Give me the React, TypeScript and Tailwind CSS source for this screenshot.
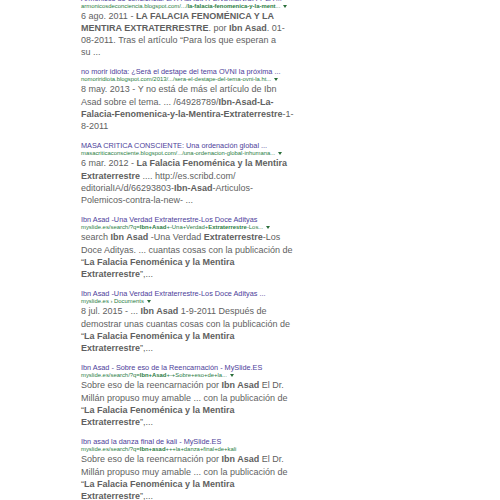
import React from "react";

type Seg = string | { b: string };
type R = { title: string; url: Seg[]; caret?: boolean; lines: Seg[][] };

const render = (segs: Seg[]) =>
  segs.map((s, i) =>
    typeof s === "string" ? (
      <span key={i}>{s}</span>
    ) : (
      <span key={i} className="font-bold">
        {s.b}
      </span>
    )
  );

const falacia: Seg[][] = [
  ["“", { b: "La Falacia Fenoménica y la Mentira" }],
  [{ b: "Extraterrestre" }, "”,..."],
];

const results: R[] = [
  {
    title: "Armónicos de conciencia: LA FALACIA FENOMÉNICA Y LA ...",
    url: [
      "armonicosdeconciencia.blogspot.com/.../",
      { b: "la-falacia-fenomenica-y-la-ment" },
      "...",
    ],
    caret: true,
    lines: [
      ["6 ago. 2011 - ", { b: "LA FALACIA FENOMÉNICA Y LA" }],
      [{ b: "MENTIRA EXTRATERRESTRE" }, ". por ", { b: "Ibn Asad" }, ". 01-"],
      ["08-2011. Tras el artículo “Para los que esperan a"],
      ["su ..."],
    ],
  },
  {
    title: "no morir idiota: ¿Será el destape del tema OVNI la próxima ...",
    url: ["nomoriridiota.blogspot.com/2013/.../sera-el-destape-del-tema-ovni-la.ht..."],
    caret: true,
    lines: [
      ["8 may. 2013 - Y no está de más el artículo de Ibn"],
      ["Asad sobre el tema. ... /64928789/", { b: "Ibn-Asad-La-" }],
      [{ b: "Falacia-Fenomenica-y-la-Mentira-Extraterrestre" }, "-1-"],
      ["8-2011"],
    ],
  },
  {
    title: "MASA CRITICA CONSCIENTE: Una ordenación global ...",
    url: ["masacriticaconsciente.blogspot.com/.../una-ordenacion-global-inhumana..."],
    caret: true,
    lines: [
      ["6 mar. 2012 - ", { b: "La Falacia Fenoménica y la Mentira" }],
      [{ b: "Extraterrestre" }, " .... http://es.scribd.com/"],
      ["editorialIA/d/66293803-", { b: "Ibn-Asad" }, "-Articulos-"],
      ["Polemicos-contra-la-new- ..."],
    ],
  },
  {
    title: "Ibn Asad -Una Verdad Extraterrestre-Los Doce Adityas",
    url: [
      "myslide.es/search/?q=",
      { b: "Ibn+Asad" },
      "+-Una+Verdad+",
      { b: "Extraterrestre" },
      "-Los...",
    ],
    caret: true,
    lines: [
      ["search ", { b: "Ibn Asad" }, " -Una Verdad ", { b: "Extraterrestre" }, "-Los"],
      ["Doce Adityas. ... cuantas cosas con la publicación de"],
      ...falacia,
    ],
  },
  {
    title: "Ibn Asad -Una Verdad Extraterrestre-Los Doce Adityas ...",
    url: ["myslide.es › Documents"],
    caret: true,
    lines: [
      ["8 jul. 2015 - ... ", { b: "Ibn Asad" }, " 1-9-2011 Después de"],
      ["demostrar unas cuantas cosas con la publicación de"],
      ...falacia,
    ],
  },
  {
    title: "Ibn Asad - Sobre eso de la Reencarnación - MySlide.ES",
    url: ["myslide.es/search/?q=", { b: "Ibn+Asad" }, "+-+Sobre+eso+de+la..."],
    caret: true,
    lines: [
      ["Sobre eso de la reencarnación por ", { b: "Ibn Asad" }, " El Dr."],
      ["Millán propuso muy amable ... con la publicación de"],
      ...falacia,
    ],
  },
  {
    title: "Ibn asad la danza final de kali - MySlide.ES",
    url: ["myslide.es/search/?q=", { b: "Ibn+asad" }, "+++la+danza+final+de+kali"],
    caret: false,
    lines: [
      ["Sobre eso de la reencarnación por ", { b: "Ibn Asad" }, " El Dr."],
      ["Millán propuso muy amable ... con la publicación de"],
      ...falacia,
    ],
  },
];

function Result({ r, first }: { r: R; first: boolean }) {
  return (
    <div className={first ? "mt-[-5.5px] mb-[9.8px]" : "mb-[9.8px]"}>
      <div className="whitespace-nowrap text-[7.3px] leading-[8px] text-[#4d3e9a]">{r.title}</div>
      <div className="flex items-center whitespace-nowrap text-[5.9px] leading-[7px] text-[#2a7d3f]">
        <span>{render(r.url)}</span>
        {r.caret && (
          <span className="ml-[3px] inline-block h-0 w-0 border-x-[2px] border-t-[3px] border-x-transparent border-t-[#2a6e3a]" />
        )}
      </div>
      <div className="text-[9px] leading-[12.3px] text-[#5f5f5f]">
        {r.lines.map((l, i) => (
          <div key={i} className="whitespace-nowrap">
            {render(l)}
          </div>
        ))}
      </div>
    </div>
  );
}

export default function App() {
  return (
    <div
      className="h-[500px] w-[500px] overflow-hidden bg-white pl-[81px]"
      style={{ fontFamily: '"Liberation Sans", Arial, sans-serif' }}
    >
      {results.map((r, i) => (
        <Result key={i} r={r} first={i === 0} />
      ))}
    </div>
  );
}
